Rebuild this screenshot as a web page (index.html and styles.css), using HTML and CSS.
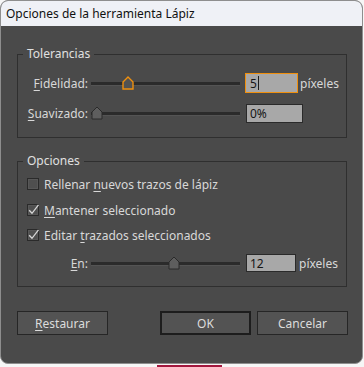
FILE: index.html
```html
<!DOCTYPE html>
<html lang="es">
<head>
<meta charset="utf-8">
<title>Opciones de la herramienta Lápiz</title>
<link rel="stylesheet" href="styles.css">
</head>
<body>
<div class="window">
  <div class="titlebar">Opciones de la herramienta Lápiz</div>
  <div class="content">
    <div class="group g1">
      <span class="legend">Tolerancias</span>
      <div class="row">
        <span class="lbl"><u>F</u>idelidad:</span>
        <div class="slider">
          <svg class="thumb" style="left:31px" width="12" height="14" viewBox="0 0 12 14"><path d="M1 6 L6 1 L11 6 V13 H1 Z" fill="#525252" stroke="#f0900e" stroke-width="1.4" stroke-linejoin="miter"/></svg>
        </div>
        <div class="field f-fid">5<span class="caret"></span></div>
        <span class="unit u-fid">píxeles</span>
      </div>
      <div class="row">
        <span class="lbl"><u>S</u>uavizado:</span>
        <div class="slider">
          <svg class="thumb" style="left:0px" width="12" height="14" viewBox="0 0 12 14"><path d="M1 6 L6 1 L11 6 V13 H1 Z" fill="#5e5e5e" stroke="#2a2a2a" stroke-width="1"/></svg>
        </div>
        <div class="field f-suav">0%</div>
      </div>
    </div>

    <div class="group g2">
      <span class="legend">Opciones</span>
      <div class="row chk">
        <svg class="box" width="12" height="12" viewBox="0 0 12 12"><rect x="0.5" y="0.5" width="11" height="11" fill="#4f4f4f" stroke="#2a2a2a"/><rect x="1.5" y="1.5" width="9" height="9" fill="none" stroke="#585858"/></svg>
        <span>Rellenar <u>n</u>uevos trazos de lápiz</span>
      </div>
      <div class="row chk r2">
        <svg class="box" width="12" height="12" viewBox="0 0 12 12"><rect x="0.5" y="0.5" width="11" height="11" fill="#4f4f4f" stroke="#2a2a2a"/><rect x="1.5" y="1.5" width="9" height="9" fill="none" stroke="#585858"/><path d="M2.2 6.2 L5 9.3 L11.5 0.8" fill="none" stroke="#d6d6d6" stroke-width="1.3"/></svg>
        <span><u>M</u>antener seleccionado</span>
      </div>
      <div class="row chk r3">
        <svg class="box" width="12" height="12" viewBox="0 0 12 12"><rect x="0.5" y="0.5" width="11" height="11" fill="#4f4f4f" stroke="#2a2a2a"/><rect x="1.5" y="1.5" width="9" height="9" fill="none" stroke="#585858"/><path d="M2.2 6.2 L5 9.3 L11.5 0.8" fill="none" stroke="#d6d6d6" stroke-width="1.3"/></svg>
        <span>Editar <u>t</u>razados seleccionados</span>
      </div>
      <div class="row r4">
        <span class="lbl"><u>E</u>n:</span>
        <div class="slider">
          <svg class="thumb" style="left:77px" width="12" height="14" viewBox="0 0 12 14"><path d="M1 6 L6 1 L11 6 V13 H1 Z" fill="#5e5e5e" stroke="#2a2a2a" stroke-width="1"/></svg>
        </div>
        <div class="field f-en">12</div>
        <span class="unit u-en">píxeles</span>
      </div>
    </div>

    <div class="buttons">
      <button class="btn"><u>R</u>estaurar</button>
      <button class="btn ok">OK</button>
      <button class="btn cancel">Cancelar</button>
    </div>
  </div>
</div>
<div class="strip"></div>
</body>
</html>
```

FILE: styles.css
```css
* { box-sizing: border-box; margin: 0; padding: 0; }
html, body { background: #f6f6f6; }
body {
  font-family: "Noto Sans", "DejaVu Sans", sans-serif;
  font-size: 12px;
  width: 364px;
  height: 367px;
  overflow: hidden;
}
u { text-decoration: underline; text-underline-offset: 2px; }

.window {
  width: 363px;
  height: 364px;
  border: 1px solid #8e8e8e;
  border-radius: 8px;
  overflow: hidden;
  background: #4a4a4a;
  display: flex;
  flex-direction: column;
}
.titlebar {
  flex: none;
  height: 25px;
  line-height: 26px;
  padding-left: 5px;
  background: #eff1f6;
  color: #111;
}
.content {
  flex: 1;
  padding: 28px 15px 0 16px;
  color: #d8d8d8;
}

.group {
  position: relative;
  border: 1px solid #2f2f2f;
  display: flex;
  flex-direction: column;
}
.g1 { height: 84px; padding-top: 18px; gap: 10px; }
.g2 { height: 126px; margin-top: 23px; padding-top: 12px; }
.legend {
  position: absolute;
  top: -9px;
  left: 5px;
  padding: 0 4px;
  line-height: 16px;
  background: #4a4a4a;
  color: #e0e0e0;
}

.row { display: flex; align-items: center; height: 20px; flex: none; }
.lbl { width: 70px; text-align: right; flex: none; }
.slider {
  position: relative;
  flex: none;
  width: 149px;
  height: 20px;
  margin-left: 3px;
}
.slider::before {
  content: "";
  position: absolute;
  left: 0;
  right: 0;
  top: 9px;
  height: 3px;
  background: #2b2b2b;
  box-shadow: 0 1px 0 #545454;
}
.thumb { position: absolute; top: 3px; }

.field {
  flex: none;
  border: 1px solid #2a2a2a;
  background: #a8a8a8;
  color: #161616;
  display: flex;
  align-items: center;
}
.f-fid { width: 53px; height: 20px; margin-left: 5px; padding-left: 4px; border-color: #f0900e; }
.f-suav { width: 57px; height: 19px; margin-left: 6px; padding-left: 3px; }
.f-en { width: 50px; height: 18px; margin-left: 6px; padding-left: 3px; }
.caret { display: inline-block; width: 1px; height: 14px; background: #1e1e1e; margin-left: 1px; }
.unit { flex: none; }
.u-fid { margin-left: 2px; }
.u-en { margin-left: 3px; }

.chk { margin-left: 9px; gap: 5px; }
.box { flex: none; }
.r2 { margin-top: 6px; }
.r3 { margin-top: 5px; }
.r4 { margin-top: 8px; }

.buttons {
  display: flex;
  height: 24px;
  margin-top: 24px;
  margin-right: -1px;
}
.btn {
  width: 91px;
  height: 24px;
  border: 1px solid #262626;
  background: #535353;
  color: #dcdcdc;
  font-family: inherit;
  font-size: 12px;
  text-align: center;
}
.ok { margin-left: auto; border: 2px solid #1d1d1d; }
.cancel { margin-left: 6px; }

.strip {
  width: 65px;
  height: 2px;
  margin: 1px 0 0 157px;
  background: #a3173d;
}
```
